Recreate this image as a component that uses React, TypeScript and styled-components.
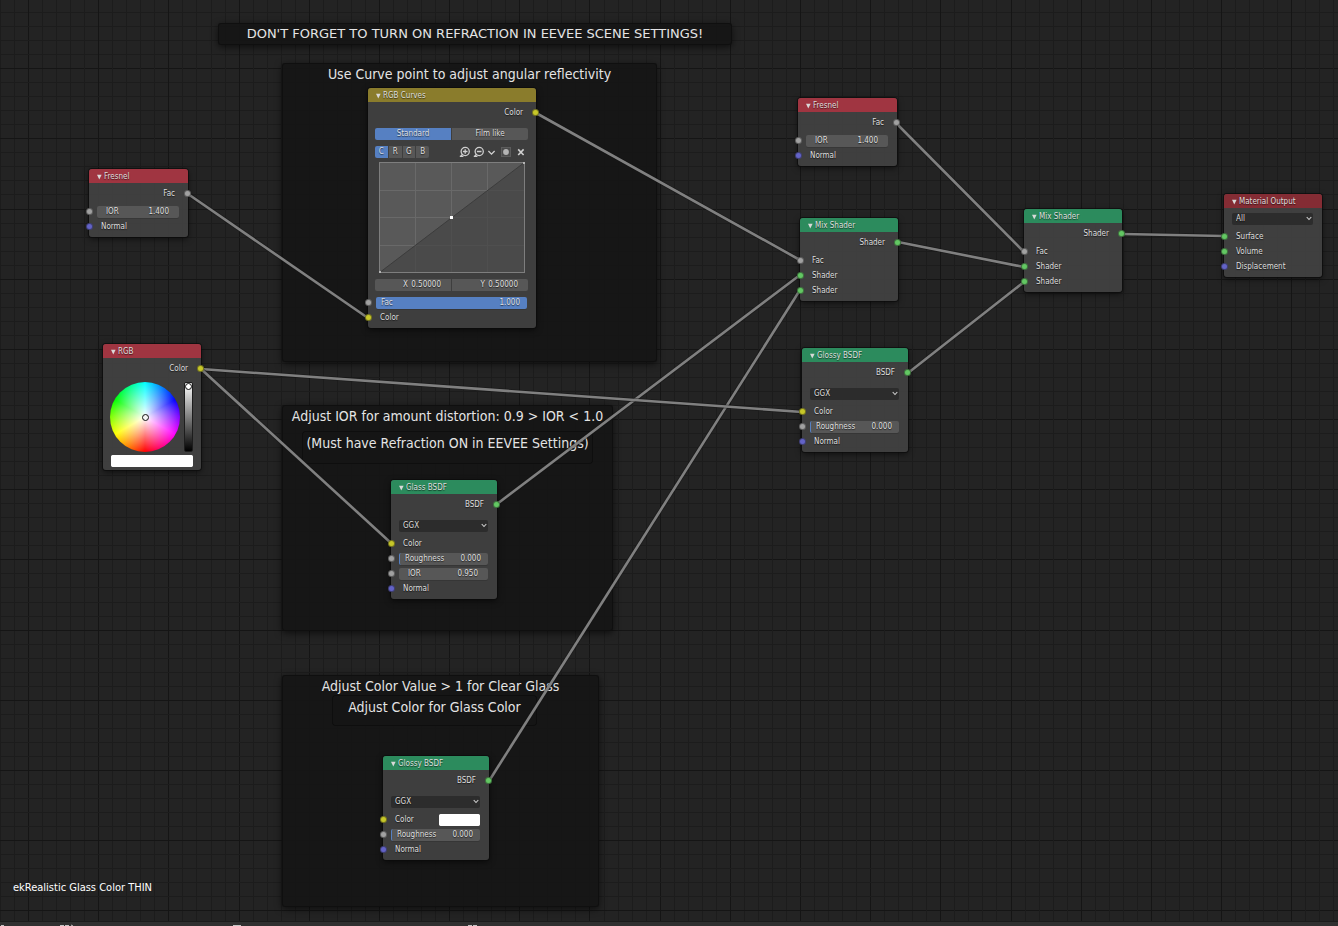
import React, { useId, useState } from "react";
import styled, { createGlobalStyle, css } from "styled-components";

const GlobalStyle = createGlobalStyle`
  *, *::before, *::after { box-sizing: border-box; }
  body {
    margin: 0;
    background: #232323;
    color: #dedede;
    font: 8px/12px "DejaVu Sans Condensed", "DejaVu Sans", sans-serif;
  }
  button, input, select { font: inherit; color: inherit; }
`;

const palette = {
  red: "#a03541",
  darkRed: "#842c34",
  green: "#2c8b5d",
  gold: "#8a7c2c",
  blue: "#5680c2",
  field: "#575757",
  well: "#2c2c2c",
};

const socketColors = {
  value: "#a1a1a1",
  color: "#c7c729",
  vector: "#6363c7",
  shader: "#63c763",
};
type SocketKind = keyof typeof socketColors;

/* ---------- page ---------- */

const Editor = styled.div`
  display: flex;
  flex-direction: column;
  min-height: 100vh;
`;

const Canvas = styled.main`
  position: relative;
  flex: 1 0 auto;
  min-height: 912px;
  overflow: hidden;
`;

const Layer = styled.svg`
  position: absolute;
  inset: 0;
  width: 100%;
  height: 100%;
  pointer-events: none;
`;

const StatusBar = styled.footer`
  height: 5px;
  background: #303030;
  border-top: 1px solid #1b1b1b;
  overflow: hidden;
  svg { display: block; }
`;

const MaterialName = styled.p`
  position: absolute;
  left: 13px;
  bottom: 25px;
  margin: 0;
  color: #fff;
  font-size: 11px;
  line-height: 16px;
`;

/* ---------- frames ---------- */

interface Box { x: number; y: number; w: number; h: number }

const Frame = styled.section<Box & { $inner?: boolean }>`
  position: absolute;
  left: ${(p) => p.x}px;
  top: ${(p) => p.y}px;
  width: ${(p) => p.w}px;
  height: ${(p) => p.h}px;
  border-radius: 3px;
  background: rgba(21, 21, 21, 0.94);
  box-shadow: ${(p) =>
    p.$inner
      ? "0 0 0 1px #0e0e0e"
      : "inset 0 0 0 1px rgba(12, 12, 12, 0.6), 0 2px 7px rgba(0, 0, 0, 0.6)"};
`;

const FrameLabel = styled.h2`
  margin: 0;
  color: #e4e4e4;
  font-size: 14px;
  font-weight: 400;
  line-height: 22px;
  text-align: center;
  white-space: nowrap;
`;

const NoticeLabel = styled(FrameLabel)`
  font-family: "DejaVu Sans", sans-serif;
  font-size: 13px;
`;

/* ---------- nodes ---------- */

const NodeBox = styled.article<{ x: number; y: number; w: number }>`
  position: absolute;
  left: ${(p) => p.x}px;
  top: ${(p) => p.y}px;
  width: ${(p) => p.w}px;
  padding-bottom: 3px;
  border-radius: 3px;
  background: rgba(64, 64, 64, 0.97);
  box-shadow: 0 0 0 1px rgba(12, 12, 12, 0.7), 0 2px 6px rgba(0, 0, 0, 0.6);
  text-shadow: 0 1px 1px rgba(0, 0, 0, 0.6);
`;

const NodeHeader = styled.header<{ $tone: string }>`
  display: flex;
  align-items: center;
  gap: 2px;
  height: 14px;
  padding: 1px 0 0 8px;
  border-radius: 3px 3px 0 0;
  background: ${(p) => p.$tone};
`;

const NodeTitle = styled.h3`
  margin: 0;
  font-size: 8px;
  font-weight: 400;
  line-height: 13px;
  white-space: nowrap;
`;

const Collapse = styled.button`
  display: flex;
  width: 5px;
  height: 6px;
  padding: 0;
  border: 0;
  background: none;
`;

const OutputRow = styled.div`
  position: relative;
  display: flex;
  align-items: center;
  justify-content: flex-end;
  height: 21px;
  padding-right: 13px;
`;

const InputRow = styled.div`
  position: relative;
  display: flex;
  align-items: center;
  height: 15px;
  padding: 0 9px 0 8px;
`;

const InputLabel = styled.span`
  flex: 1;
  padding-left: 4px;
`;

const SelectRow = styled.div`
  display: grid;
  align-items: center;
  height: 21px;
  padding: 0 9px 0 8px;
  > * { grid-area: 1 / 1; }
  svg { justify-self: end; margin-right: 1px; pointer-events: none; }
`;

const Select = styled.select`
  width: 100%;
  height: 12px;
  padding: 0 4px;
  border: 0;
  border-radius: 2px;
  appearance: none;
  background: ${palette.well};
  text-shadow: inherit;
`;

const socketSide = {
  in: css`left: -3px;`,
  out: css`right: -3px;`,
};

const Socket = styled.i<{ $kind: SocketKind; $side: "in" | "out" }>`
  position: absolute;
  ${(p) => socketSide[p.$side]}
  width: 7px;
  height: 7px;
  border: 1px solid rgba(20, 20, 20, 0.45);
  border-radius: 50%;
  background: ${(p) => socketColors[p.$kind]};
`;

type FieldLook = "number" | "slider" | "full";

const FieldBox = styled.div<{ $look: FieldLook }>`
  display: flex;
  flex: 1;
  min-width: 0;
  height: 12px;
  padding: 0 ${(p) => (p.$look === "number" ? 10 : 7)}px 0 ${(p) => (p.$look === "number" ? 9 : 5)}px;
  border-left: ${(p) => (p.$look === "slider" ? `1px solid ${palette.blue}` : 0)};
  border-radius: 2px;
  background: ${(p) => (p.$look === "full" ? palette.blue : palette.field)};
  box-shadow: 0 1px 0 rgba(0, 0, 0, 0.12);
`;

const FieldInput = styled.input`
  flex: 1;
  min-width: 0;
  width: 0;
  height: 12px;
  padding: 0;
  border: 0;
  background: none;
  text-align: right;
  text-shadow: inherit;
`;

const Swatch = styled.input.attrs({ type: "color" })`
  display: block;
  width: 41px;
  height: 12px;
  padding: 0;
  border: 0;
  border-radius: 2px;
  appearance: none;
  background: #fff;
  &::-webkit-color-swatch-wrapper { padding: 0; }
  &::-webkit-color-swatch { border: 0; border-radius: 2px; }
`;

const WideSwatch = styled(Swatch)`
  width: 82px;
  margin: 3px 0 0 8px;
`;

/* ---------- colour picker ---------- */

const Picker = styled.div`
  display: flex;
  justify-content: space-between;
  padding: 3px 8px 0 7px;
`;

const Wheel = styled.div`
  display: grid;
  place-items: center;
  width: 70px;
  height: 70px;
  border-radius: 50%;
  background:
    radial-gradient(closest-side, #fff, rgba(255, 255, 255, 0)),
    conic-gradient(from 180deg, #f00, #ff0, #0f0, #0ff, #00f, #f0f, #f00);
`;

const WheelCursor = styled.span`
  width: 7px;
  height: 7px;
  border: 1px solid #111;
  border-radius: 50%;
  background: #f4f4f4;
`;

const ValueSlider = styled.input.attrs({ type: "range" })`
  width: 9px;
  height: 70px;
  margin: 0;
  appearance: none;
  writing-mode: vertical-lr;
  direction: rtl;
  border: 1px solid #1d1d1d;
  border-radius: 2px;
  background: linear-gradient(#fff, #000);
  &::-webkit-slider-thumb {
    width: 7px;
    height: 7px;
    appearance: none;
    border: 1px solid #111;
    border-radius: 50%;
    background: #fff;
  }
`;

/* ---------- curve widget ---------- */

const CurveBody = styled.div`
  display: flex;
  flex-direction: column;
  gap: 6px;
  padding: 5px 8px 4px 7px;
`;

const Split = styled.div`
  display: grid;
  grid-template-columns: 1fr 1fr;
  gap: 1px;
  border-radius: 2px;
  overflow: hidden;
`;

const Toggle = styled.button<{ $on?: boolean }>`
  height: 12px;
  padding: 0;
  border: 0;
  background: ${(p) => (p.$on ? palette.blue : palette.field)};
  line-height: 12px;
  text-shadow: inherit;
`;

const CurveTools = styled.div`
  display: flex;
  align-items: center;
  justify-content: space-between;
  padding-right: 3px;
`;

const Channels = styled.div`
  display: grid;
  grid-template-columns: repeat(4, 1fr);
  gap: 1px;
  width: 54px;
  border-radius: 2px;
  overflow: hidden;
`;

const ToolIcons = styled.div`
  display: flex;
  align-items: center;
  gap: 3px;
`;

const IconButton = styled.button`
  display: flex;
  padding: 0;
  border: 0;
  background: none;
`;

const Graph = styled.svg`
  display: block;
  align-self: center;
  width: 146px;
  height: 111px;
  margin-top: -2px;
`;

const Coordinate = styled.div`
  display: flex;
  justify-content: flex-end;
  height: 12px;
  padding-right: 10px;
  background: ${palette.field};
`;

const CoordinateInput = styled(FieldInput)`
  flex: none;
  width: 33px;
`;

/* ---------- pieces ---------- */

function Node(props: { x: number; y: number; w: number; tone: string; title: string; children: React.ReactNode }) {
  return (
    <NodeBox x={props.x} y={props.y} w={props.w}>
      <NodeHeader $tone={props.tone}>
        <Collapse aria-label={`Collapse ${props.title}`}>
          <svg width="5" height="6" viewBox="0 0 5 6">
            <path d="M0 .8H4.6L2.3 5.6Z" fill="#d9d9d9" />
          </svg>
        </Collapse>
        <NodeTitle>{props.title}</NodeTitle>
      </NodeHeader>
      {props.children}
    </NodeBox>
  );
}

function Output({ kind, label }: { kind: SocketKind; label: string }) {
  return (
    <OutputRow>
      {label}
      <Socket $kind={kind} $side="out" />
    </OutputRow>
  );
}

function Input({ kind, label, children }: { kind: SocketKind; label: string; children?: React.ReactNode }) {
  return (
    <InputRow>
      <Socket $kind={kind} $side="in" />
      <InputLabel>{label}</InputLabel>
      {children}
    </InputRow>
  );
}

function Field({ label, value, look = "number" }: { label: string; value: string; look?: FieldLook }) {
  const id = useId();
  return (
    <InputRow>
      <Socket $kind="value" $side="in" />
      <FieldBox $look={look}>
        <label htmlFor={id}>{label}</label>
        <FieldInput id={id} defaultValue={value} />
      </FieldBox>
    </InputRow>
  );
}

function Dropdown({ label, value }: { label: string; value: string }) {
  return (
    <SelectRow>
      <Select aria-label={label} defaultValue={value}>
        <option>{value}</option>
      </Select>
      <svg width="6" height="5" viewBox="0 0 6 5">
        <path d="M.7 1L3 3.5L5.3 1" fill="none" stroke="#d0d0d0" strokeWidth="1.1" />
      </svg>
    </SelectRow>
  );
}

function CurveGraph() {
  return (
    <Graph viewBox="0 0 146 111" role="img" aria-label="Reflectivity curve">
      <rect width="146" height="111" fill="#595959" />
      <path d="M36.5 0V111M72.5 0V111M108.5 0V111M0 28.5H146M0 55.5H146M0 83.5H146" stroke="#696969" />
      <path d="M0 111L146 0V111Z" fill="#444" fillOpacity=".7" />
      <path d="M0 111L146 0" stroke="#3c3c3c" />
      <rect x=".5" y=".5" width="145" height="110" fill="none" stroke="#7e7e7e" />
      <path d="M71 54h3v3h-3z" fill="#fff" />
      <path d="M144 0h2v2h-2zM0 109h2v2h-2z" fill="#b5b5b5" />
    </Graph>
  );
}

const iconStroke = { fill: "none", stroke: "#cfcfcf", strokeWidth: 1.3 };

function CurveNode() {
  const [mode, setMode] = useState("Standard");
  const [channel, setChannel] = useState("C");
  return (
    <Node x={368} y={88} w={168} tone={palette.gold} title="RGB Curves">
      <Output kind="color" label="Color" />
      <CurveBody>
        <Split>
          {["Standard", "Film like"].map((m) => (
            <Toggle key={m} $on={m === mode} aria-pressed={m === mode} onClick={() => setMode(m)}>{m}</Toggle>
          ))}
        </Split>
        <CurveTools>
          <Channels>
            {["C", "R", "G", "B"].map((c) => (
              <Toggle key={c} $on={c === channel} aria-pressed={c === channel} onClick={() => setChannel(c)}>{c}</Toggle>
            ))}
          </Channels>
          <ToolIcons>
            <IconButton aria-label="Zoom in">
              <svg width="11" height="12" viewBox="0 0 11 12" {...iconStroke}>
                <circle cx="6.2" cy="5.5" r="4.1" /><path d="M6.2 3.2V7.8M3.9 5.5H8.5M3.6 8.2L1.4 10.4M.8 10.3H4.4" />
              </svg>
            </IconButton>
            <IconButton aria-label="Zoom out">
              <svg width="11" height="12" viewBox="0 0 11 12" {...iconStroke}>
                <circle cx="6.2" cy="5.5" r="4.1" /><path d="M3.9 5.5H8.5M3.6 8.2L1.4 10.4M.8 10.3H4.4" />
              </svg>
            </IconButton>
            <IconButton aria-label="Tools">
              <svg width="9" height="12" viewBox="0 0 9 12" {...iconStroke}>
                <path d="M1.4 5L4.5 8.1L7.6 5" />
              </svg>
            </IconButton>
            <IconButton aria-label="Clipping">
              <svg width="13" height="12" viewBox="0 0 13 12">
                <rect x="2.5" y="1.5" width="9" height="9" fill="#4b4b4b" stroke="#5c5c5c" />
                <circle cx="7" cy="6" r="2.9" fill="#b4b4b4" />
              </svg>
            </IconButton>
            <IconButton aria-label="Delete point">
              <svg width="10" height="12" viewBox="0 0 10 12" {...iconStroke} strokeWidth="1.6">
                <path d="M3.2 3.4L8.6 9M8.6 3.4L3.2 9" />
              </svg>
            </IconButton>
          </ToolIcons>
        </CurveTools>
        <CurveGraph />
        <Split>
          <Coordinate>
            <label htmlFor="point-x">X</label>
            <CoordinateInput id="point-x" defaultValue="0.50000" />
          </Coordinate>
          <Coordinate>
            <label htmlFor="point-y">Y</label>
            <CoordinateInput id="point-y" defaultValue="0.50000" />
          </Coordinate>
        </Split>
      </CurveBody>
      <Field label="Fac" value="1.000" look="full" />
      <Input kind="color" label="Color" />
    </Node>
  );
}

function FresnelNode({ x, y }: { x: number; y: number }) {
  return (
    <Node x={x} y={y} w={99} tone={palette.red} title="Fresnel">
      <Output kind="value" label="Fac" />
      <Field label="IOR" value="1.400" />
      <Input kind="vector" label="Normal" />
    </Node>
  );
}

function MixNode({ x, y }: { x: number; y: number }) {
  return (
    <Node x={x} y={y} w={98} tone={palette.green} title="Mix Shader">
      <Output kind="shader" label="Shader" />
      <Input kind="value" label="Fac" />
      <Input kind="shader" label="Shader" />
      <Input kind="shader" label="Shader" />
    </Node>
  );
}

function GlossyNode({ x, y, swatch }: { x: number; y: number; swatch?: boolean }) {
  return (
    <Node x={x} y={y} w={106} tone={palette.green} title="Glossy BSDF">
      <Output kind="shader" label="BSDF" />
      <Dropdown label="Distribution" value="GGX" />
      <Input kind="color" label="Color">
        {swatch && <Swatch aria-label="Glossy color" defaultValue="#ffffff" />}
      </Input>
      <Field label="Roughness" value="0.000" look="slider" />
      <Input kind="vector" label="Normal" />
    </Node>
  );
}

/* ---------- grid and links ---------- */

const GRID_STEP = 14.035;
const gridLines = Array.from({ length: 280 }, (_, i) => ({
  at: Math.round(i * GRID_STEP),
  i,
}));
const lineColor = (major: boolean) => (major ? "#151515" : "#1c1c1c");

function Grid() {
  return (
    <Layer shapeRendering="crispEdges" aria-hidden="true">
      {gridLines.map(({ at, i }) => (
        <g key={i}>
          <rect x={at} width="1" height="100%" fill={lineColor(i % 5 === 2)} />
          <rect y={at - 2} width="100%" height="1" fill={lineColor(i % 5 === 0)} />
        </g>
      ))}
    </Layer>
  );
}

const links = [
  [188, 194, 368, 318],
  [536, 113, 800, 260],
  [497, 504, 800, 275],
  [489, 781, 800, 290],
  [201, 369, 802, 412],
  [201, 369, 391, 543],
  [897, 124, 1024, 252],
  [898, 242, 1024, 267],
  [908, 373, 1024, 282],
  [1122, 234, 1224, 236],
];

function Links() {
  return (
    <Layer aria-hidden="true">
      {links.map(([x1, y1, x2, y2]) => (
        <g key={`${x1}-${y1}-${x2}`}>
          <line x1={x1} y1={y1} x2={x2} y2={y2} stroke="#111" strokeOpacity=".5" strokeWidth="4" />
          <line x1={x1} y1={y1} x2={x2} y2={y2} stroke="#808080" strokeWidth="2.6" />
        </g>
      ))}
    </Layer>
  );
}

export default function App() {
  return (
    <Editor>
      <GlobalStyle />
      <Canvas>
        <Grid />

        <Frame x={218} y={23} w={514} h={22}>
          <NoticeLabel>DON'T FORGET TO TURN ON REFRACTION IN EEVEE SCENE SETTINGS!</NoticeLabel>
        </Frame>
        <Frame x={282} y={63} w={375} h={299}>
          <FrameLabel>Use Curve point to adjust angular reflectivity</FrameLabel>
        </Frame>
        <Frame x={282} y={405} w={331} h={226}>
          <FrameLabel>Adjust IOR for amount distortion: 0.9 &gt; IOR &lt; 1.0</FrameLabel>
        </Frame>
        <Frame x={303} y={432} w={289} h={31} $inner>
          <FrameLabel>(Must have Refraction ON in EEVEE Settings)</FrameLabel>
        </Frame>
        <Frame x={282} y={675} w={317} h={232}>
          <FrameLabel>Adjust Color Value &gt; 1 for Clear Glass</FrameLabel>
        </Frame>
        <Frame x={333} y={696} w={203} h={29} $inner>
          <FrameLabel>Adjust Color for Glass Color</FrameLabel>
        </Frame>

        <Links />

        <FresnelNode x={89} y={169} />
        <Node x={103} y={344} w={98} tone={palette.red} title="RGB">
          <Output kind="color" label="Color" />
          <Picker>
            <Wheel><WheelCursor /></Wheel>
            <ValueSlider aria-label="Value" min={0} max={100} defaultValue={100} />
          </Picker>
          <WideSwatch aria-label="Color" defaultValue="#ffffff" />
        </Node>
        <CurveNode />
        <Node x={391} y={480} w={106} tone={palette.green} title="Glass BSDF">
          <Output kind="shader" label="BSDF" />
          <Dropdown label="Distribution" value="GGX" />
          <Input kind="color" label="Color" />
          <Field label="Roughness" value="0.000" look="slider" />
          <Field label="IOR" value="0.950" />
          <Input kind="vector" label="Normal" />
        </Node>
        <GlossyNode x={383} y={756} swatch />
        <FresnelNode x={798} y={98} />
        <MixNode x={800} y={218} />
        <GlossyNode x={802} y={348} />
        <MixNode x={1024} y={209} />
        <Node x={1224} y={194} w={98} tone={palette.darkRed} title="Material Output">
          <Dropdown label="Target" value="All" />
          <Input kind="shader" label="Surface" />
          <Input kind="shader" label="Volume" />
          <Input kind="vector" label="Displacement" />
        </Node>

        <MaterialName>ekRealistic Glass Color THIN</MaterialName>
      </Canvas>
      <StatusBar>
        <svg width="500" height="4" aria-hidden="true">
          <path d="M1 3.5H4M60 3.5H64M65 3.5H69M71 3L73 4M233 3.5H241M468 3.5H472M473 3.5H477" stroke="#c4c4c4" fill="none" />
        </svg>
      </StatusBar>
    </Editor>
  );
}
